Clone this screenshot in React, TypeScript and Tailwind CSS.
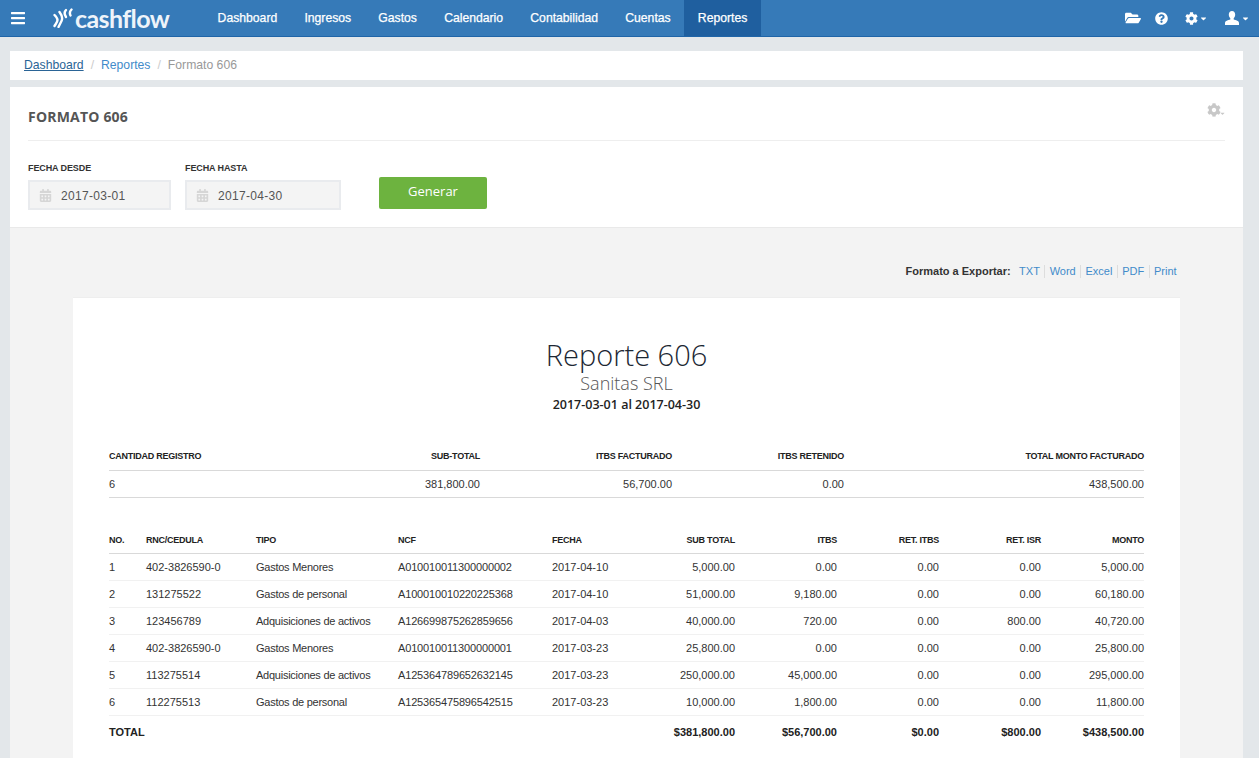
import { FaBars, FaCalendarAlt, FaCaretDown, FaCog, FaFolderOpen, FaQuestionCircle } from 'react-icons/fa';

const sans = "font-['Liberation_Sans',Arial,sans-serif]";
const open = "font-['Open_Sans',sans-serif]";

const navItems = ['Dashboard', 'Ingresos', 'Gastos', 'Calendario', 'Contabilidad', 'Cuentas', 'Reportes'];
const exportLinks = ['TXT', 'Word', 'Excel', 'PDF', 'Print'];

const rows = [
  ['1', '402-3826590-0', 'Gastos Menores', 'A010010011300000002', '2017-04-10', '5,000.00', '0.00', '0.00', '0.00', '5,000.00'],
  ['2', '131275522', 'Gastos de personal', 'A100010010220225368', '2017-04-10', '51,000.00', '9,180.00', '0.00', '0.00', '60,180.00'],
  ['3', '123456789', 'Adquisiciones de activos', 'A126699875262859656', '2017-04-03', '40,000.00', '720.00', '0.00', '800.00', '40,720.00'],
  ['4', '402-3826590-0', 'Gastos Menores', 'A010010011300000001', '2017-03-23', '25,800.00', '0.00', '0.00', '0.00', '25,800.00'],
  ['5', '113275514', 'Adquisiciones de activos', 'A125364789652632145', '2017-03-23', '250,000.00', '45,000.00', '0.00', '0.00', '295,000.00'],
  ['6', '112275513', 'Gastos de personal', 'A125365475896542515', '2017-03-23', '10,000.00', '1,800.00', '0.00', '0.00', '11,800.00'],
];

function Logo() {
  return (
    <div className="flex items-center">
      <svg width="20" height="20" viewBox="0 0 20 20" fill="none" stroke="white" strokeWidth="2.4" strokeLinecap="round">
        <path d="M1.500 7c2 2 3 3 3 5s-1 3-3 6" />
        <path d="M6.500 4c3 4 3 7 2 9s-2 4-3 6" />
        <path d="M13 2c-2 2-2 4 0 7" />
        <path d="M18.500 1.500c-2 2-2 4-1 6" />
      </svg>
      <span className="ml-[2px] font-['Lato',sans-serif] text-[25px] leading-none font-bold tracking-[-0.6px] text-[#eef4fa]">cashflow</span>
    </div>
  );
}

// fa4 style bust, the fa5 one in react-icons has no neck
function UserIcon() {
  return (
    <svg width="14" height="14" viewBox="0 0 14 14" fill="white">
      <path d="M7 0c2 0 3.200 1.500 3.200 3.600 0 1.600-.7 3-1.500 3.700v1.300c2 .6 5.300 1.400 5.300 3.400v2H0v-2c0-2 3.300-2.800 5.300-3.400V7.300c-.8-.7-1.500-2.100-1.500-3.700C3.800 1.500 5 0 7 0z" />
    </svg>
  );
}

function DateField({ label, value, width }: { label: string; value: string; width: string }) {
  return (
    <div className={`${width} shrink-0`}>
      <div className={`${sans} h-[18px] text-[9px] leading-[12px] font-bold tracking-[-0.1px] text-[#333]`}>{label}</div>
      <div className="flex h-[30px] items-center border-2 border-[#e9ebee] bg-[#f4f4f4] pl-[9px]">
        <FaCalendarAlt className="text-[13px] text-[#d6d6d6]" />
        <span className={`${sans} ml-[9px] pt-[1px] text-[12px] tracking-[0.3px] text-[#555]`}>{value}</span>
      </div>
    </div>
  );
}

function Report() {
  return (
    <div className={`${sans} mx-[63px] border-t border-[#eeeeee] bg-white px-[36px] pt-[39px] pb-[26px] text-[11px] text-[#333]`}>
      <div className="text-center text-[#222]">
        <h1 className={`${open} text-[29px] leading-[36px] font-light text-[#1c2733]`}>Reporte 606</h1>
        <div className={`${open} text-[18px] leading-[20px] font-light text-[#555]`}>Sanitas SRL</div>
        <div className={`${open} mt-[2px] text-[12.5px] leading-[20px] font-semibold text-[#222]`}>2017-03-01 al 2017-04-30</div>
      </div>

      <table className="mt-[28px] w-full table-fixed border-collapse">
        <colgroup>
          <col className="w-[200px]" />
          <col className="w-[171px]" />
          <col className="w-[192px]" />
          <col className="w-[172px]" />
          <col />
        </colgroup>
        <thead>
          <tr className="h-[27px] border-b border-[#d9d9d9] text-[9px] font-bold tracking-[-0.25px] text-[#222] [&>th]:pt-[1px]">
            <th className="text-left font-bold">CANTIDAD REGISTRO</th>
            <th className="text-right font-bold">SUB-TOTAL</th>
            <th className="text-right font-bold">ITBS FACTURADO</th>
            <th className="text-right font-bold">ITBS RETENIDO</th>
            <th className="text-right font-bold">TOTAL MONTO FACTURADO</th>
          </tr>
        </thead>
        <tbody>
          <tr className="h-[27px] border-b border-[#d9d9d9] text-[#333] [&>td]:pt-[1px]">
            <td>6</td>
            <td className="text-right">381,800.00</td>
            <td className="text-right">56,700.00</td>
            <td className="text-right">0.00</td>
            <td className="text-right">438,500.00</td>
          </tr>
        </tbody>
      </table>

      <table className="mt-[29px] w-full table-fixed border-collapse">
        <colgroup>
          <col className="w-[37px]" />
          <col className="w-[110px]" />
          <col className="w-[142px]" />
          <col className="w-[154px]" />
          <col className="w-[80px]" />
          <col className="w-[103px]" />
          <col className="w-[102px]" />
          <col className="w-[102px]" />
          <col className="w-[102px]" />
          <col />
        </colgroup>
        <thead>
          <tr className="h-[27px] border-b border-[#d9d9d9] text-[9px] tracking-[-0.25px] text-[#222] [&>th]:pt-[1px]">
            {['NO.', 'RNC/CEDULA', 'TIPO', 'NCF', 'FECHA'].map((h) => (
              <th key={h} className="text-left font-bold">{h}</th>
            ))}
            {['SUB TOTAL', 'ITBS', 'RET. ITBS', 'RET. ISR', 'MONTO'].map((h) => (
              <th key={h} className="text-right font-bold">{h}</th>
            ))}
          </tr>
        </thead>
        <tbody>
          {rows.map((row) => (
            <tr key={row[0]} className="h-[27px] border-b border-[#f1f1f1] last:border-[#d9d9d9]">
              {row.map((cell, i) => (
                <td
                  key={i}
                  className={i > 4 ? 'text-right' : i === 2 ? 'text-left tracking-[-0.25px]' : i === 3 ? 'text-left tracking-[-0.15px]' : 'text-left'}
                >
                  {cell}
                </td>
              ))}
            </tr>
          ))}
          <tr className="h-[33px] font-bold text-[#222]">
            <td colSpan={5}>TOTAL</td>
            <td className="text-right">$381,800.00</td>
            <td className="text-right">$56,700.00</td>
            <td className="text-right">$0.00</td>
            <td className="text-right">$800.00</td>
            <td className="text-right">$438,500.00</td>
          </tr>
        </tbody>
      </table>
    </div>
  );
}

export default function App() {
  return (
    <div className="h-[758px] overflow-hidden bg-[#e3e7ea]">
      <header className="flex h-[37px] items-center border-b border-[#1f65a8] bg-[#367ab8] text-white">
        <FaBars className="ml-[10px] text-[16px]" />
        <div className="ml-[27px] w-[151px]">
          <Logo />
        </div>
        <nav className={`${sans} flex h-full text-[12.2px] font-normal`}>
          {navItems.map((item) => (
            <a key={item} className={`flex items-center px-[13.6px] [-webkit-text-stroke:0.25px_white] ${item === 'Reportes' ? 'bg-[#1f5f9f]' : ''}`}>
              {item}
            </a>
          ))}
        </nav>
        <div className="ml-auto flex items-center pr-[9px] text-[13px]">
          <FaFolderOpen className="text-[16px]" />
          <FaQuestionCircle className="ml-[14px]" />
          <div className="ml-[17px] flex items-center">
            <FaCog />
            <FaCaretDown className="ml-[1px] text-[9px]" />
          </div>
          <div className="ml-[17px] flex items-center">
            <UserIcon />
            <FaCaretDown className="ml-[2px] text-[9px]" />
          </div>
        </div>
      </header>

      <div className="mr-[16px] ml-[10px]">
        <div className={`${sans} mt-[14px] flex h-[29px] items-center bg-white pl-[14px] text-[12.2px]`}>
          <a className="text-[#2a6496] underline">Dashboard</a>
          <span className="mx-[7px] text-[#ccc]">/</span>
          <a className="text-[#428bca]">Reportes</a>
          <span className="mx-[7px] text-[#ccc]">/</span>
          <span className="text-[#999]">Formato 606</span>
        </div>

        <section className="mt-[7px] bg-white px-[18px]">
          <div className="flex h-[54px] items-start justify-between border-b border-[#eeeeee]">
            <h2 className={`${open} mt-[21px] text-[14px] leading-[18px] font-bold tracking-[0.2px] text-[#555]`}>FORMATO 606</h2>
            <div className="mt-[16px] -mr-[1px] flex items-center text-[#c8c8c8]">
              <FaCog className="text-[14px]" />
              <FaCaretDown className="-ml-[2px] mt-[7px] text-[7px]" />
            </div>
          </div>
          <div className="flex h-[86px] items-start pt-[21px]">
            <DateField label="FECHA DESDE" value="2017-03-01" width="w-[143px]" />
            <div className="ml-[14px]">
              <DateField label="FECHA HASTA" value="2017-04-30" width="w-[156px]" />
            </div>
            <button className={`${open} mt-[15px] ml-[38px] h-[32px] w-[108px] rounded-[2px] bg-[#6db33f] pb-[2px] text-[13px] text-white`}>Generar</button>
          </div>
        </section>

        <section className="border-t border-[#e9e9e9] bg-[#f3f3f3]">
          <div className={`${sans} flex h-[69px] items-start justify-end pt-[37px] pr-[62px] text-[11px] leading-[13px]`}>
            <span className="mr-[4px] font-bold text-[#333]">Formato a Exportar:</span>
            {exportLinks.map((link, i) => (
              <a key={link} className={`px-[4.4px] text-[#428bca] ${i < exportLinks.length - 1 ? 'border-r border-[#dddddd]' : ''}`}>{link}</a>
            ))}
          </div>
          <Report />
        </section>
      </div>
    </div>
  );
}
